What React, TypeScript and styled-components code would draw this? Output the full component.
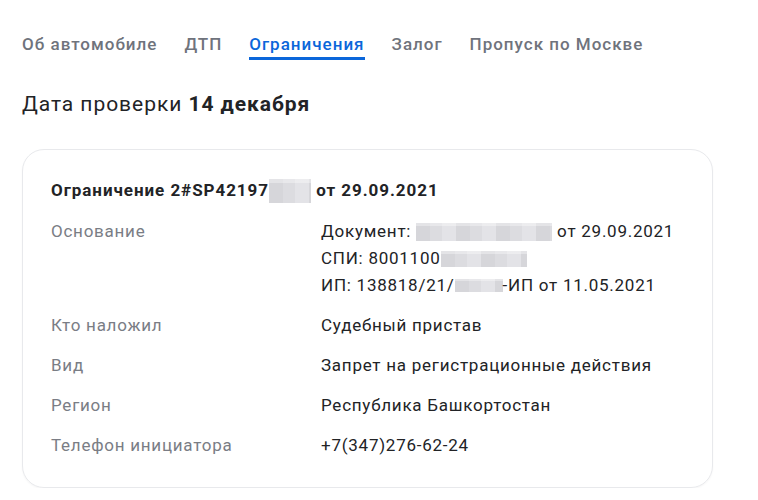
import { FC, Fragment } from 'react'
import styled, { createGlobalStyle } from 'styled-components'

const GlobalStyle = createGlobalStyle`
  body {
    margin: 0;
    background: #ffffff;
    font-family: Roboto, 'Noto Sans', sans-serif;
    color: #222326;
  }
`

const StyledPage = styled.div`
  padding: 34px 45px 0 22px;
`

const StyledTabs = styled.nav`
  display: flex;
  gap: 27px;
`

const StyledTab = styled.span<{ $active?: boolean }>`
  font-size: 17px;
  line-height: 20px;
  font-weight: 500;
  letter-spacing: 1px;
  padding-bottom: 3px;
  color: ${({ $active }) => ($active ? '#0b66da' : '#6f737c')};
  border-bottom: 3px solid ${({ $active }) => ($active ? '#0b66da' : 'transparent')};
`

const StyledHeading = styled.h2`
  margin: 30px 0 31px;
  font-size: 21px;
  line-height: 28px;
  font-weight: 400;
  letter-spacing: 0.95px;

  b {
    font-weight: 700;
  }
`

const StyledCard = styled.section`
  border: 1px solid #e8e9ec;
  border-radius: 22px;
  padding: 27px 28px 28px;
  box-shadow: 0 1px 2px rgba(0, 0, 0, 0.04);
`

const StyledTitle = styled.h3`
  margin: 0 0 14px;
  font-size: 17px;
  line-height: 27px;
  font-weight: 700;
  letter-spacing: 0.95px;
  display: flex;
  align-items: center;
  white-space: pre;
`

const StyledGrid = styled.dl`
  margin: 0;
  display: grid;
  grid-template-columns: 270px 1fr;
  row-gap: 13px;
  font-size: 17px;
  line-height: 27px;
  letter-spacing: 0.75px;
`

const StyledLabel = styled.dt`
  color: #7a7d85;
`

const StyledValue = styled.dd`
  margin: 0;
  color: #222326;
`

const StyledLine = styled.div`
  display: flex;
  align-items: center;
  white-space: pre;
`

const StyledBlur = styled.span<{ $w: number; $h: number }>`
  display: inline-block;
  width: ${({ $w }) => $w}px;
  height: ${({ $h }) => $h}px;
  background:
    linear-gradient(180deg, rgba(255, 255, 255, 0.35) 0 18%, transparent 18%),
    repeating-linear-gradient(
      90deg,
      #d6d6da 0 14px,
      #dcdce0 14px 26px,
      #e3e3e7 26px 40px
    );
`

interface IRow {
  label: string
  lines: React.ReactNode[]
}

const rows: IRow[] = [
  {
    label: 'Основание',
    lines: [
      <>
        Документ: <StyledBlur $w={136} $h={18} /> от 29.09.2021
      </>,
      <>
        СПИ: 8001100
        <StyledBlur $w={86} $h={16} />
      </>,
      <>
        ИП: 138818/21/
        <StyledBlur $w={48} $h={13} />
        -ИП от 11.05.2021
      </>,
    ],
  },
  { label: 'Кто наложил', lines: ['Судебный пристав'] },
  { label: 'Вид', lines: ['Запрет на регистрационные действия'] },
  { label: 'Регион', lines: ['Республика Башкортостан'] },
  { label: 'Телефон инициатора', lines: ['+7(347)276-62-24'] },
]

const tabs = ['Об автомобиле', 'ДТП', 'Ограничения', 'Залог', 'Пропуск по Москве']

const App: FC = () => (
  <>
    <GlobalStyle />
    <StyledPage>
      <StyledTabs>
        {tabs.map((tab) => (
          <StyledTab key={tab} $active={tab === 'Ограничения'}>
            {tab}
          </StyledTab>
        ))}
      </StyledTabs>
      <StyledHeading>
        Дата проверки <b>14 декабря</b>
      </StyledHeading>
      <StyledCard>
        <StyledTitle>
          Ограничение 2#SP42197
          <StyledBlur $w={42} $h={24} /> от 29.09.2021
        </StyledTitle>
        <StyledGrid>
          {rows.map((row) => (
            <Fragment key={row.label}>
              <StyledLabel>{row.label}</StyledLabel>
              <StyledValue>
                {row.lines.map((line, i) => (
                  <StyledLine key={i}>{line}</StyledLine>
                ))}
              </StyledValue>
            </Fragment>
          ))}
        </StyledGrid>
      </StyledCard>
    </StyledPage>
  </>
)

export default App
